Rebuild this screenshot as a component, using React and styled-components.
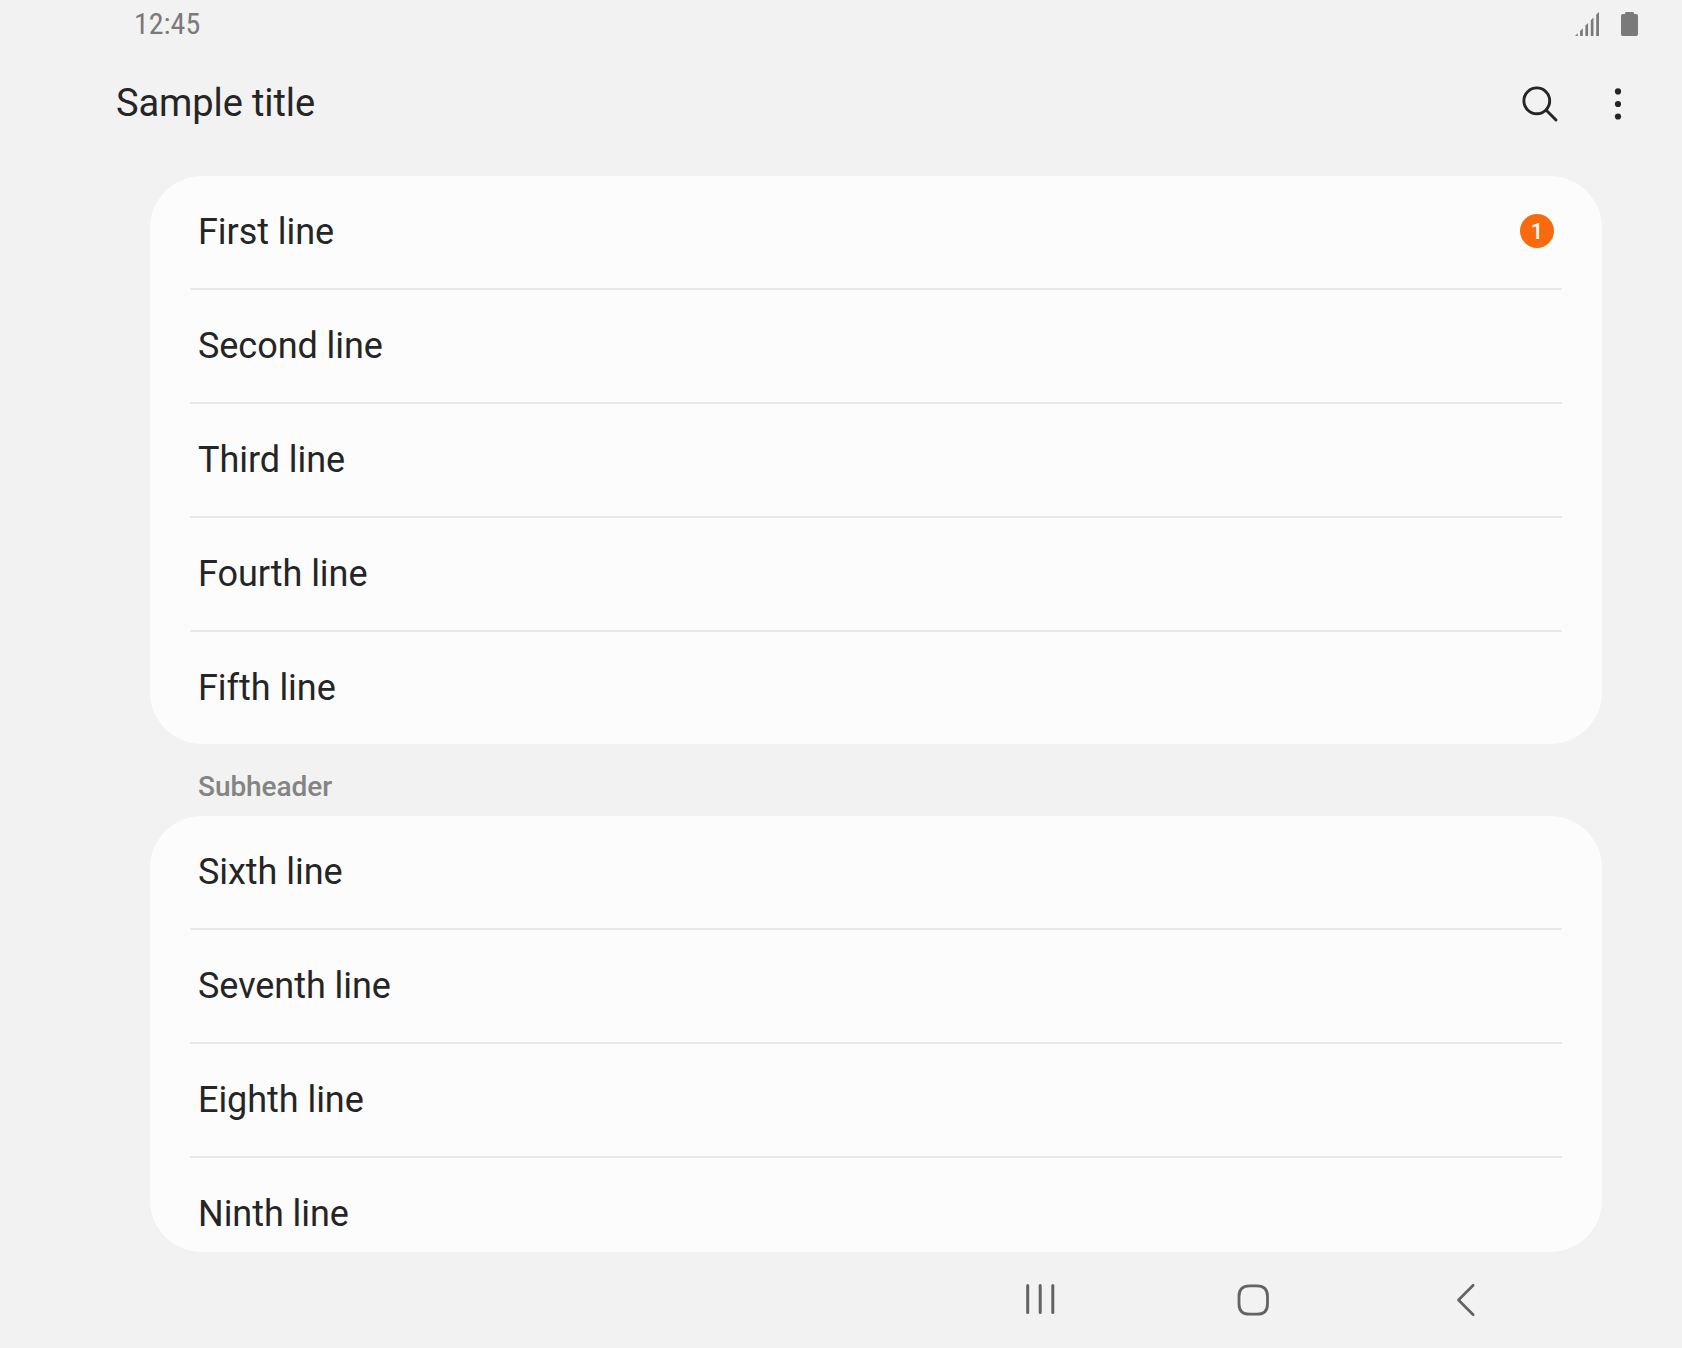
import React from "react";
import styled, { createGlobalStyle } from "styled-components";

const GlobalStyle = createGlobalStyle`
  * { box-sizing: border-box; }
  body {
    margin: 0;
    background: #f2f2f2;
    color: #252525;
    font-family: Roboto, "Noto Sans", sans-serif;
  }
`;

const Screen = styled.div`
  display: flex;
  flex-direction: column;
  width: 1682px;
  height: 1348px;
  overflow: hidden;
  background: #f2f2f2;
`;

const StatusBar = styled.header`
  display: flex;
  justify-content: space-between;
  align-items: center;
  height: 48px;
  padding: 0 44px 0 134px;
  flex: none;
`;

const Clock = styled.span`
  font-family: "Roboto Condensed", Roboto, sans-serif;
  font-stretch: 75%;
  font-size: 30px;
  line-height: 48px;
  color: #7a7a7a;
`;

const StatusIcons = styled.div`
  display: flex;
  align-items: center;
  gap: 22px;
`;

const AppBar = styled.div`
  display: flex;
  justify-content: space-between;
  align-items: center;
  height: 112px;
  padding: 0 40px 0 116px;
  flex: none;
`;

const Title = styled.h1`
  margin: 0;
  padding-bottom: 2px;
  font-size: 38px;
  font-weight: 400;
  line-height: 48px;
  letter-spacing: -0.1px;
`;

const Actions = styled.div`
  display: flex;
  gap: 30px;
`;

const IconButton = styled.button`
  display: flex;
  padding: 0;
  border: 0;
  background: none;
  color: ${(p) => p.$color || "#252525"};
`;

const Content = styled.main`
  display: flex;
  flex-direction: column;
  height: 1076px;
  margin: 16px 80px 0 150px;
  overflow: hidden;
  border-radius: 52px;
  flex: none;
`;

const Card = styled.ul`
  flex: none;
  margin: 0;
  padding: 0 40px;
  list-style: none;
  background: #fcfcfc;
  border-radius: 52px;
`;

const Row = styled.li`
  display: flex;
  align-items: center;
  justify-content: space-between;
  height: 112px;
  padding: 0 8px;
  font-size: 36px;
  line-height: 48px;
  letter-spacing: -0.05px;

  & + & {
    height: 114px;
    border-top: 2px solid #e9e9e9;
  }
`;

const Badge = styled.span`
  width: 34px;
  height: 34px;
  margin-top: -2px;
  border-radius: 50%;
  background: #f76b0e;
  color: #fcfcfc;
  font-size: 22px;
  font-weight: 500;
  line-height: 35px;
  text-align: center;
`;

const Subheader = styled.h2`
  flex: none;
  height: 72px;
  margin: 0;
  padding: 12px 48px 0;
  color: #848484;
  font-size: 28px;
  font-weight: 500;
  line-height: 62px;
  letter-spacing: -0.05px;
`;

const NavBar = styled.nav`
  display: flex;
  justify-content: flex-end;
  align-items: center;
  gap: 165px;
  height: 96px;
  padding-right: 192px;
  flex: none;
`;

const SignalIcon = () => (
  <svg width="24" height="24" viewBox="0 0 24 24" fill="#7a7a7a">
    <path d="M0 24L2.7 21.3V24ZM5.1 24V18.9L7.8 16.2V24ZM10.4 24V13.6L13.1 10.9V24ZM15.8 24V8.2L18.5 5.5V24ZM21.2 24V2.8L24 0V24Z" />
  </svg>
);

const BatteryIcon = () => (
  <svg width="17" height="24" viewBox="0 0 17 24" fill="#7a7a7a">
    <path d="M4 2V1.3Q4 0 5.3 0H11.7Q13 0 13 1.3V2H15.3Q17 2 17 3.7V22.3Q17 24 15.3 24H1.7Q0 24 0 22.3V3.7Q0 2 1.7 2Z" />
  </svg>
);

const SearchIcon = () => (
  <svg width="48" height="48" viewBox="0 0 48 48" fill="none" stroke="currentColor" strokeWidth="2.9" strokeLinecap="round">
    <circle cx="20.8" cy="20.8" r="12.9" />
    <path d="M30.3 30.3L40 40" />
  </svg>
);

const MoreIcon = () => (
  <svg width="48" height="48" viewBox="0 0 48 48" fill="currentColor">
    <circle cx="24" cy="11.4" r="3.1" />
    <circle cx="24" cy="24" r="3.1" />
    <circle cx="24" cy="36.5" r="3.1" />
  </svg>
);

const RecentsIcon = () => (
  <svg width="48" height="48" viewBox="0 0 48 48" fill="none" stroke="currentColor" strokeWidth="3" strokeLinecap="round">
    <path d="M11.7 9.5V36.5M24.2 9.5V36.5M36.8 9.5V36.5" />
  </svg>
);

const HomeIcon = () => (
  <svg width="48" height="48" viewBox="0 0 48 48" fill="none" stroke="currentColor" strokeWidth="2.8">
    <path d="M20.5 9.8H28Q38.5 9.8 38.5 20.3V27.7Q38.5 38.2 28 38.2H20.5Q10 38.2 10 27.7V20.3Q10 9.8 20.5 9.8Z" />
  </svg>
);

const BackIcon = () => (
  <svg width="48" height="48" viewBox="0 0 48 48" fill="none" stroke="currentColor" strokeWidth="2.7" strokeLinecap="round" strokeLinejoin="round">
    <path d="M31.2 9.3L16.5 24L31.2 38.7" />
  </svg>
);

const FIRST_GROUP = [
  { label: "First line", count: 1 },
  { label: "Second line" },
  { label: "Third line" },
  { label: "Fourth line" },
  { label: "Fifth line" },
];

const SECOND_GROUP = [
  { label: "Sixth line" },
  { label: "Seventh line" },
  { label: "Eighth line" },
  { label: "Ninth line" },
];

const ListCard = ({ items }) => (
  <Card>
    {items.map(({ label, count }) => (
      <Row key={label}>
        {label}
        {count && <Badge>{count}</Badge>}
      </Row>
    ))}
  </Card>
);

export default function App() {
  return (
    <>
      <GlobalStyle />
      <Screen>
        <StatusBar>
          <Clock>12:45</Clock>
          <StatusIcons>
            <SignalIcon />
            <BatteryIcon />
          </StatusIcons>
        </StatusBar>
        <AppBar>
          <Title>Sample title</Title>
          <Actions>
            <IconButton aria-label="Search"><SearchIcon /></IconButton>
            <IconButton aria-label="More options"><MoreIcon /></IconButton>
          </Actions>
        </AppBar>
        <Content>
          <ListCard items={FIRST_GROUP} />
          <Subheader>Subheader</Subheader>
          <ListCard items={SECOND_GROUP} />
        </Content>
        <NavBar>
          <IconButton $color="#636363" aria-label="Recents"><RecentsIcon /></IconButton>
          <IconButton $color="#636363" aria-label="Home"><HomeIcon /></IconButton>
          <IconButton $color="#636363" aria-label="Back"><BackIcon /></IconButton>
        </NavBar>
      </Screen>
    </>
  );
}
